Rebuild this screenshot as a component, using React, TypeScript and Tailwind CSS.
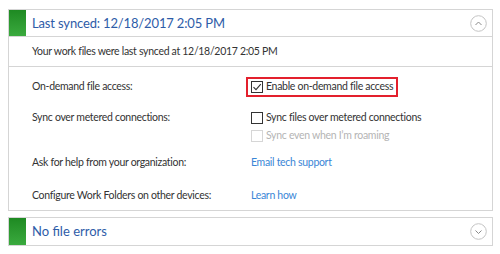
import React from "react";

const font = { fontFamily: 'Lato, "Open Sans", sans-serif' };

function Chevron({ up }: { up: boolean }) {
  return (
    <svg width="17" height="17" viewBox="0 0 17 17" className="block">
      <circle cx="8.5" cy="8.5" r="7.8" fill="none" stroke="#c4c4c4" strokeWidth="1" />
      {up ? (
        <path d="M5.5 10 L8.5 7 L11.5 10" fill="none" stroke="#8a8a8a" strokeWidth="1" />
      ) : (
        <path d="M5.5 7.5 L8.5 10.5 L11.5 7.5" fill="none" stroke="#8a8a8a" strokeWidth="1" />
      )}
    </svg>
  );
}

function Box({ checked, disabled }: { checked?: boolean; disabled?: boolean }) {
  return (
    <div
      className={`w-[12px] h-[12px] border flex items-center justify-center bg-white ${
        disabled ? "border-[#d6d6d6]" : "border-[#333333]"
      }`}
    >
      {checked && (
        <svg width="10" height="10" viewBox="0 0 10 10">
          <path d="M1.5 5.2 L4 7.7 L8.8 2.2" fill="none" stroke="#333" strokeWidth="1.1" />
        </svg>
      )}
    </div>
  );
}

export default function App() {
  return (
    <div className="w-[500px] h-[254px] bg-white text-[#333333]" style={font}>
      <div className="pl-[8px] pt-[9px] w-[493px]">
        <div className="border border-[#d5d5d5]">
          <div className="h-[27px] flex items-center border-b border-[#d5d5d5]">
            <div className="w-[17px] h-[26px] bg-gradient-to-b from-[#1e8a22] to-[#3aaa3e]" />
            <div className="ml-[6px] text-[13px] tracking-[-0.15px] text-[#2e5ca8] leading-none flex-1">
              Last synced: 12/18/2017 2:05 PM
            </div>
            <div className="mr-[5px]">
              <Chevron up />
            </div>
          </div>
          <div className="h-[30px] flex items-center pl-[23px] text-[10.5px] tracking-[-0.3px] border-b border-[#d5d5d5]">
            Your work files were last synced at 12/18/2017 2:05 PM
          </div>
          <div className="pl-[23px] pt-[10px] pb-[4px] text-[10.5px] tracking-[-0.3px]">
            <div className="flex h-[20px] items-center">
              <div className="w-[214px]">On-demand file access:</div>
              <div className="h-[20px] flex items-center border-2 border-[#e3202d] pl-[3px] pr-[3px]">
                <Box checked />
                <span className="ml-[3px]">Enable on-demand file access</span>
              </div>
            </div>
            <div className="flex mt-[12px]">
              <div className="w-[219px] h-[18px] flex items-center">Sync over metered connections:</div>
              <div className="flex flex-col">
                <div className="h-[18px] flex items-center">
                  <Box />
                  <span className="ml-[3px]">Sync files over metered connections</span>
                </div>
                <div className="h-[18px] flex items-center text-[#b4b4b4]">
                  <Box disabled />
                  <span className="ml-[3px]">Sync even when I’m roaming</span>
                </div>
              </div>
            </div>
            <div className="flex h-[20px] items-center mt-[8px]">
              <div className="w-[219px]">Ask for help from your organization:</div>
              <div className="text-[#3a86d6]">Email tech support</div>
            </div>
            <div className="flex h-[20px] items-center mt-[13px]">
              <div className="w-[219px]">Configure Work Folders on other devices:</div>
              <div className="text-[#3a86d6]">Learn how</div>
            </div>
          </div>
        </div>
        <div className="mt-[6px] border border-[#d5d5d5] h-[29px] flex items-center">
          <div className="w-[17px] h-[27px] bg-gradient-to-b from-[#1e8a22] to-[#3aaa3e]" />
          <div className="ml-[6px] text-[13px] text-[#2e5ca8] leading-none flex-1">No file errors</div>
          <div className="mr-[5px]">
            <Chevron up={false} />
          </div>
        </div>
      </div>
    </div>
  );
}
